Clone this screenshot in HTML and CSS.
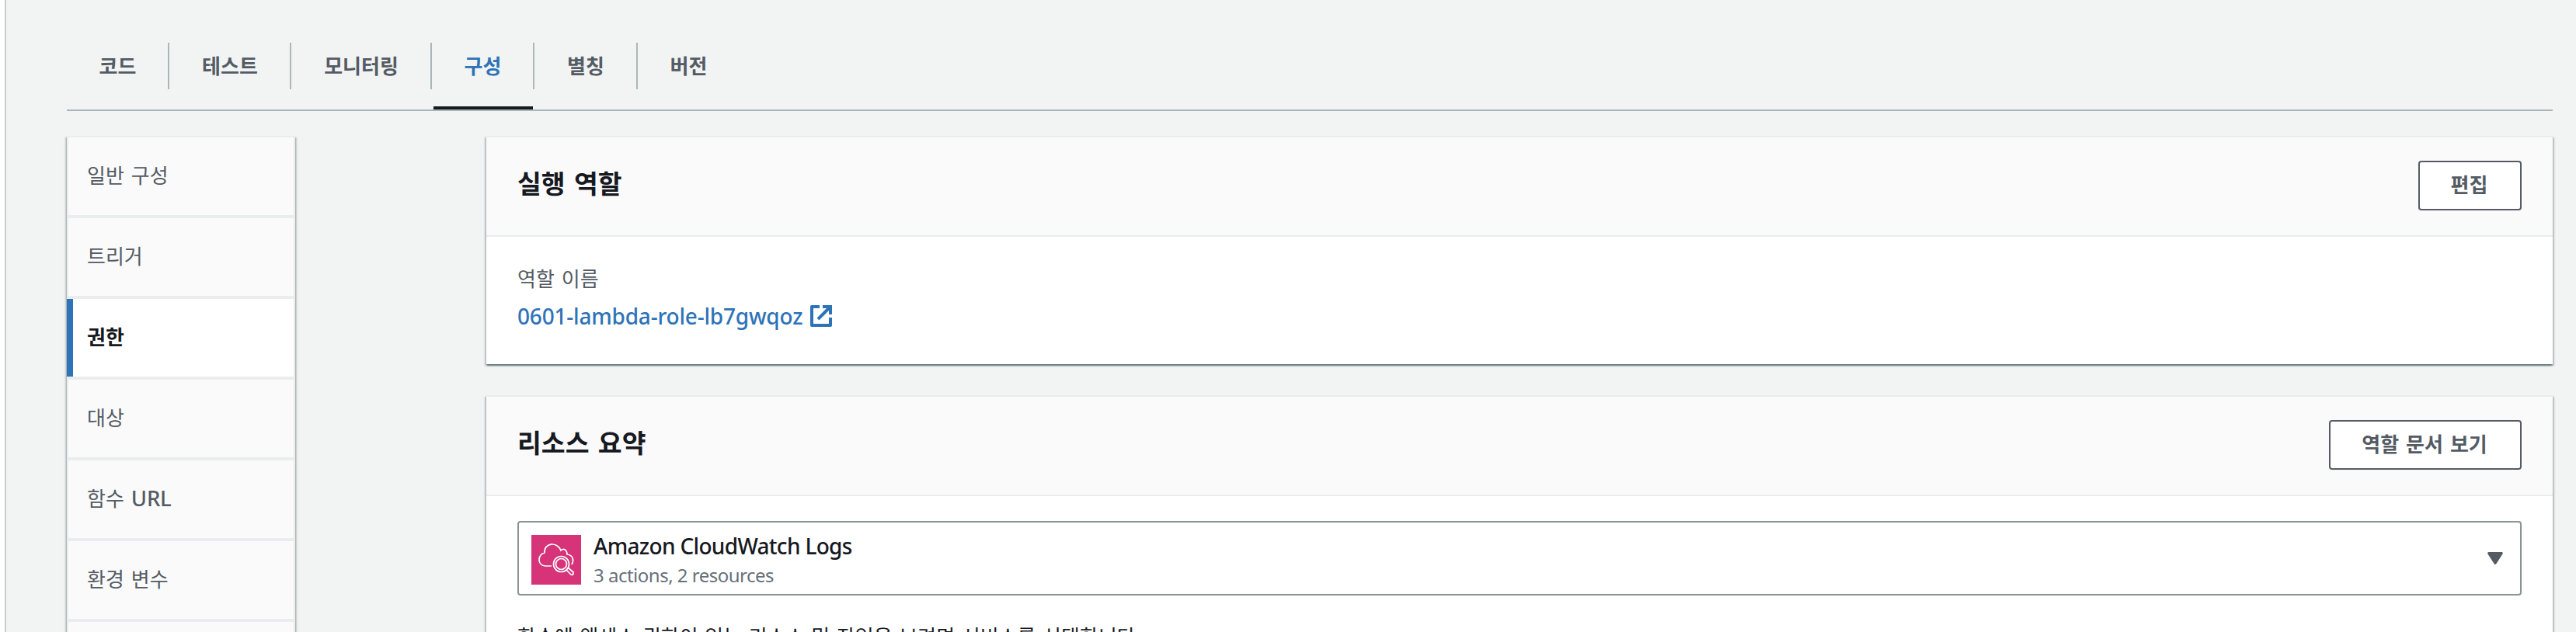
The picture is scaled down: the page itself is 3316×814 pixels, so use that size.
FILE: index.html
```html
<!DOCTYPE html>
<html lang="ko">
<head>
<meta charset="utf-8">
<title>Lambda</title>
<link rel="stylesheet" href="styles.css">
</head>
<body>
<div class="page">
  <main class="content">
    <nav class="tabs">
      <a class="tab w-2">코드</a>
      <a class="tab w-3">테스트</a>
      <a class="tab w-4">모니터링</a>
      <a class="tab w-2 tab-active">구성</a>
      <a class="tab w-2b">별칭</a>
      <a class="tab w-2 tab-last">버전</a>
    </nav>
    <div class="columns">
      <nav class="side">
        <a class="side-item">일반 구성</a>
        <a class="side-item">트리거</a>
        <a class="side-item side-active">권한</a>
        <a class="side-item">대상</a>
        <a class="side-item">함수 <span class="latin url">URL</span></a>
        <a class="side-item">환경 변수</a>
        <a class="side-item"></a>
      </nav>
      <div class="panels">
        <section class="panel role">
          <header class="panel-head"><h2>실행 역할</h2><button class="btn">편집</button></header>
          <div class="role-body">
            <div class="label">역할 이름</div>
            <a class="link"><span class="latin role-name">0601-lambda-role-lb7gwqoz</span>
              <svg class="ext" viewBox="0 0 28 28" fill="none" stroke="currentColor" stroke-width="4"><path d="M12 2H2v24h24V16" stroke-linejoin="round"/><path d="M16 2h10v10M26 2 10 18"/></svg></a>
          </div>
        </section>
        <section class="panel resources">
          <header class="panel-head"><h2>리소스 요약</h2><button class="btn btn-wide">역할 문서 보기</button></header>
          <div class="resources-body">
            <div class="select">
              <svg class="service" viewBox="0 0 64 64" fill="none" stroke="#fff" stroke-width="1.7"><rect width="64" height="64" fill="#d63379" stroke="none"/><path d="M26 40H18C7 39 8 25 17 23C16 10 33 8 38 20C42 16 46 20 46 25C54 26 55 33 52 38"/><circle cx="38.500" cy="37.500" r="10"/><circle cx="38.500" cy="37.500" r="7"/><path d="m45 45 6 6q2 1 3-1v-2l-7-6"/></svg>
              <div class="option"><span class="latin option-name">Amazon CloudWatch Logs</span><span class="latin option-meta">3 actions, 2 resources</span></div>
              <svg class="caret" viewBox="0 0 20 16"><path d="M1.500 0h17q2 .5 1 2.500L11.500 15q-1.500 2-3 0L.5 2.500Q-.5.500 1.500 0Z" fill="#545b64"/></svg>
            </div>
            <p class="hint">함수에 액세스 권한이 있는 리소스 및 작업을 보려면 서비스를 선택합니다.</p>
          </div>
        </section>
      </div>
    </div>
  </main>
</div>
</body>
</html>
```
FILE: styles.css
```css
* { box-sizing: border-box; }
body { margin: 0; background: #fff; font: 26px/40px "Noto Sans CJK KR", sans-serif; color: #545b64; word-spacing: 1.700px; overflow: hidden; }
.page { height: 814px; padding-left: 6px; overflow: hidden; }
.content { height: 814px; background: #f2f4f3; padding: 0 30px 0 78px; border-left: 2px solid #c9cdce; overflow: hidden; }
.latin { font-family: "Noto Sans", sans-serif; font-size: 28px; word-spacing: 0; }
.tabs { display: flex; height: 143px; padding-top: 55px; border-bottom: 2px solid #aab7b8; font-weight: 700; }
.tab { position: relative; height: 60px; line-height: 57px; text-align: center; padding-left: 1px; border-right: 2px solid #aab7b8; white-space: nowrap; }
.tab-last { border-color: transparent; }
.w-2 { width: 132px; }
.w-2b { width: 133px; }
.w-3 { width: 157px; }
.w-4 { width: 181px; }
.tab-active { color: #2e73b8; }
.tab-active::after { content: ""; position: absolute; left: 2px; right: 0; top: 82px; height: 4px; background: #16191f; }
.columns { display: flex; gap: 246px; padding-top: 32px; }
.side, .panel { box-shadow: 0 2px 2px 0 rgba(0,28,36,.4), 2px 2px 2px 0 rgba(0,28,36,.18), -2px 2px 2px 0 rgba(0,28,36,.18); }
.side { width: 294px; background: #eaeded; padding-top: 2px; display: flex; flex-direction: column; gap: 4px; }
.side-item { height: 100px; margin: 0 2px; padding-left: 24px; line-height: 96px; background: #fafafa; white-space: nowrap; }
.side-active { margin-left: 0; padding-left: 18px; border-left: 8px solid #2e73b8; background: #fff; color: #16191f; font-weight: 700; }
.url { font-weight: 500; font-size: 27.500px; line-height: 30px; letter-spacing: -.2px; }
.panels { flex: 1; display: flex; flex-direction: column; gap: 40px; }
.panel { background: #fff; border-top: 2px solid #eaeded; }
.role { height: 294px; }
.resources { height: 400px; }
.panel-head { height: 128px; padding: 0 40px; display: flex; justify-content: space-between; align-items: center; background: #fafafa; border-bottom: 2px solid #eaeded; }
h2 { margin: 0; font-size: 33.500px; line-height: 48px; font-weight: 700; color: #16191f; word-spacing: 2px; padding-bottom: 10px; }
.btn { width: 133px; height: 64px; margin-bottom: 2px; padding: 0 2px 4px 0; border: 2px solid #545b64; border-radius: 4px; background: #fff; color: #545b64; font: inherit; font-weight: 700; word-spacing: 1.700px; }
.btn-wide { width: 248px; }
.role-body { padding: 32px 40px; }
.label { line-height: 42px; margin-bottom: 2px; }
.link { display: flex; align-items: center; gap: 10px; color: #2e73b8; line-height: 52px; }
.role-name { font-weight: 500; width: 367px; white-space: nowrap; letter-spacing: -.2px; }
.ext { width: 28px; height: 28px; }
.resources-body { padding: 32px 40px; }
.select { height: 96px; display: flex; align-items: center; border: 2px solid #879596; border-radius: 4px; padding: 0 22px 0 16px; }
.service { width: 64px; height: 64px; margin-top: 4px; }
.option { flex: 1; display: flex; flex-direction: column; margin: 4px 0 0 16px; }
.option-name { font-weight: 500; line-height: 40px; color: #16191f; letter-spacing: -.68px; }
.option-meta { font-size: 24px; line-height: 36px; color: #687078; letter-spacing: -.5px; }
.caret { width: 20px; height: 16px; }
.hint { margin: 32px 0 0; line-height: 40px; color: #16191f; white-space: nowrap; word-spacing: 1.400px; }
```
